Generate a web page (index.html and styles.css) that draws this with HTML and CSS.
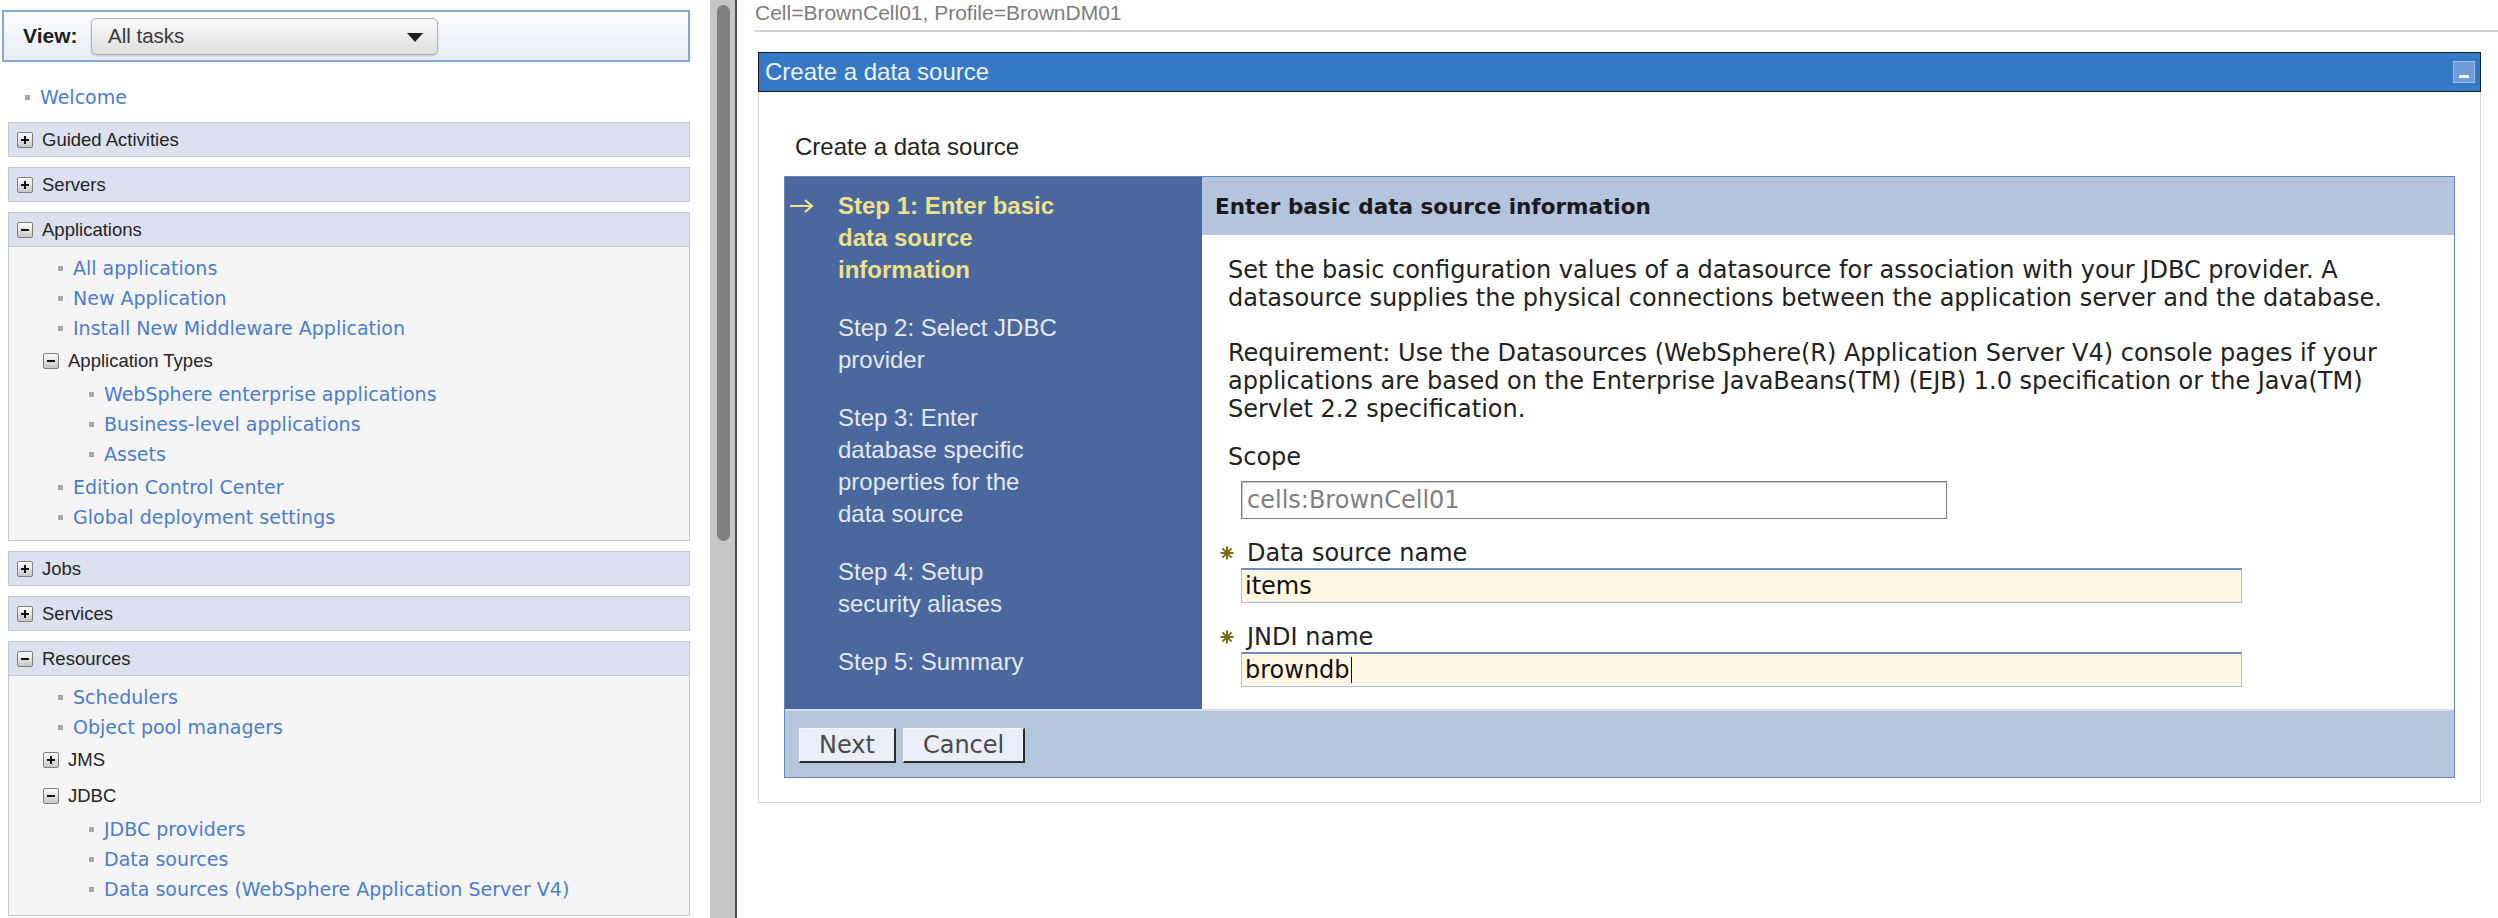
FILE: index.html
```html
<!DOCTYPE html>
<html lang="en">
<head>
<meta charset="utf-8">
<title>Create a data source</title>
<link rel="stylesheet" href="styles.css">
</head>
<body>
<div class="app">
  <aside class="nav">
    <div class="view-bar">
      <span class="view-label">View:</span>
      <div class="select"><span>All tasks</span><span class="caret"></span></div>
    </div>
    <div class="home"><span class="dot"></span><a class="lnk">Welcome</a></div>

    <div class="grp"><div class="grp-head"><span class="tg plus"></span>Guided Activities</div></div>
    <div class="grp"><div class="grp-head"><span class="tg plus"></span>Servers</div></div>
    <div class="grp">
      <div class="grp-head"><span class="tg minus"></span>Applications</div>
      <div class="grp-body">
        <div class="item"><span class="dot"></span><a class="lnk">All applications</a></div>
        <div class="item"><span class="dot"></span><a class="lnk">New Application</a></div>
        <div class="item"><span class="dot"></span><a class="lnk">Install New Middleware Application</a></div>
        <div class="sub"><span class="tg minus"></span>Application Types</div>
        <div class="sublist">
          <div class="item l2"><span class="dot"></span><a class="lnk">WebSphere enterprise applications</a></div>
          <div class="item l2"><span class="dot"></span><a class="lnk">Business-level applications</a></div>
          <div class="item l2"><span class="dot"></span><a class="lnk">Assets</a></div>
        </div>
        <div class="item"><span class="dot"></span><a class="lnk">Edition Control Center</a></div>
        <div class="item"><span class="dot"></span><a class="lnk">Global deployment settings</a></div>
      </div>
    </div>
    <div class="grp"><div class="grp-head"><span class="tg plus"></span>Jobs</div></div>
    <div class="grp"><div class="grp-head"><span class="tg plus"></span>Services</div></div>
    <div class="grp">
      <div class="grp-head"><span class="tg minus"></span>Resources</div>
      <div class="grp-body">
        <div class="item"><span class="dot"></span><a class="lnk">Schedulers</a></div>
        <div class="item"><span class="dot"></span><a class="lnk">Object pool managers</a></div>
        <div class="sub"><span class="tg plus"></span>JMS</div>
        <div class="sub"><span class="tg minus"></span>JDBC</div>
        <div class="sublist">
          <div class="item l2"><span class="dot"></span><a class="lnk">JDBC providers</a></div>
          <div class="item l2"><span class="dot"></span><a class="lnk">Data sources</a></div>
          <div class="item l2"><span class="dot"></span><a class="lnk">Data sources (WebSphere Application Server V4)</a></div>
        </div>
      </div>
    </div>
  </aside>

  <div class="sbar"><div class="thumb"></div></div>
  <div class="divider"></div>

  <main class="main">
    <div class="crumb">Cell=BrownCell01, Profile=BrownDM01</div>
    <div class="portlet">
      <div class="portlet-title">
        <span>Create a data source</span>
        <span class="min"><span class="min-dash"></span></span>
      </div>
      <h1 class="page-h">Create a data source</h1>
      <div class="wizard">
        <div class="wiz-main">
          <div class="steps">
            <div class="step current">
              <span class="mark"><svg width="26" height="16" viewBox="0 0 26 16"><path d="M1 8 H23 M16 2 L23 8 L16 14" fill="none" stroke="#efe28a" stroke-width="2.2"/></svg></span>
              <span class="step-text">Step 1: Enter basic data source information</span>
            </div>
            <div class="step"><span class="mark"></span><span class="step-text">Step 2: Select JDBC provider</span></div>
            <div class="step"><span class="mark"></span><span class="step-text">Step 3: Enter database specific properties for the data source</span></div>
            <div class="step"><span class="mark"></span><span class="step-text">Step 4: Setup security aliases</span></div>
            <div class="step"><span class="mark"></span><span class="step-text">Step 5: Summary</span></div>
          </div>
          <div class="wiz-content">
            <div class="wiz-head">Enter basic data source information</div>
            <div class="wiz-body">
              <p class="p1">Set the basic configuration values of a datasource for association with your JDBC provider. A datasource supplies the physical connections between the application server and the database.</p>
              <p class="p2">Requirement: Use the Datasources (WebSphere(R) Application Server V4) console pages if your applications are based on the Enterprise JavaBeans(TM) (EJB) 1.0 specification or the Java(TM) Servlet 2.2 specification.</p>
              <div class="label">Scope</div>
              <div class="inp ro">cells:BrownCell01</div>
              <div class="label req-label"><svg class="req" width="14" height="14" viewBox="0 0 14 14"><path d="M7 0.5 V13.5 M0.5 7 H13.5 M2.4 2.4 L11.6 11.6 M11.6 2.4 L2.4 11.6" stroke="#7a6a12" stroke-width="2"/></svg>Data source name</div>
              <div class="inp edit">items</div>
              <div class="label req-label"><svg class="req" width="14" height="14" viewBox="0 0 14 14"><path d="M7 0.5 V13.5 M0.5 7 H13.5 M2.4 2.4 L11.6 11.6 M11.6 2.4 L2.4 11.6" stroke="#7a6a12" stroke-width="2"/></svg>JNDI name</div>
              <div class="inp edit">browndb<span class="cursor"></span></div>
            </div>
          </div>
        </div>
        <div class="wiz-foot">
          <button class="btn">Next</button>
          <button class="btn">Cancel</button>
        </div>
      </div>
    </div>
  </main>
</div>
</body>
</html>
```

FILE: styles.css
```css
* { box-sizing: border-box; }
html, body { margin: 0; padding: 0; }
body {
  width: 2498px;
  height: 918px;
  overflow: hidden;
  background: #fff;
  font-family: "Liberation Sans", Arial, sans-serif;
  color: #222;
}
.app { display: flex; height: 918px; }

/* ---------- left navigation ---------- */
.nav { width: 710px; flex: none; overflow: hidden; background: #fff; }
.view-bar {
  margin: 10px 20px 0 2px;
  height: 52px;
  border: 2px solid #86a5d8;
  background: linear-gradient(#fdfeff, #e7ecf6);
  display: flex;
  align-items: center;
  padding-left: 19px;
}
.view-label { font-weight: bold; font-size: 21px; color: #1e1e1e; width: 55px; margin-right: 13px; }
.select {
  width: 347px;
  height: 37px;
  border: 1px solid #aeb0b4;
  border-radius: 5px;
  background: linear-gradient(#fafafa, #dedede);
  display: flex;
  align-items: center;
  justify-content: space-between;
  padding: 0 14px 0 16px;
  font-size: 20.5px;
  color: #3a3a3a;
  box-shadow: 0 1px 2px rgba(0,0,0,.18);
}
.caret {
  width: 0; height: 0;
  border-left: 8px solid transparent;
  border-right: 8px solid transparent;
  border-top: 9px solid #1e1e1e;
  margin-top: 3px;
}
.home { margin: 20px 0 10px; height: 30px; display: flex; align-items: center; padding-left: 25px; }
.dot { width: 5px; height: 5px; background: #a8a8a8; margin-right: 10px; flex: none; }
.lnk {
  font-family: "DejaVu Sans", sans-serif;
  font-size: 19px;
  color: #4a7dd0;
  text-decoration: none;
  white-space: nowrap;
}
.grp { margin: 0 20px 10px 8px; }
.grp-head {
  height: 35px;
  background: #dce0ef;
  border: 1px solid #c5c9d6;
  display: flex;
  align-items: center;
  padding-left: 8px;
  font-size: 18.5px;
  color: #252525;
}
.tg {
  width: 16px; height: 16px;
  border: 1px solid #7f7f7f;
  border-radius: 2px;
  background: linear-gradient(#fefefe, #c6c6c6);
  margin-right: 9px;
  position: relative;
  flex: none;
}
.tg::before {
  content: "";
  position: absolute;
  left: 3px; top: 6px;
  width: 8px; height: 2px;
  background: #111;
}
.tg.plus::after {
  content: "";
  position: absolute;
  left: 6px; top: 3px;
  width: 2px; height: 8px;
  background: #111;
}
.grp-body {
  background: #f5f5f5;
  border: 1px solid #c8c8c8;
  border-top: none;
  padding: 6px 0 8px;
}
.item { height: 30px; display: flex; align-items: center; padding-left: 49px; }
.item.l2 { padding-left: 80px; }
.sub {
  height: 36px;
  display: flex;
  align-items: center;
  padding-left: 34px;
  font-size: 18.5px;
  color: #252525;
}
.sublist { margin-bottom: 3px; }

/* ---------- splitter ---------- */
.sbar { width: 25px; flex: none; background: #c6c6c6; padding: 5px 0 0 7px; }
.thumb { width: 13px; height: 536px; background: #808080; border-radius: 7px; }
.divider { width: 2px; flex: none; background: #4d4d4d; }

/* ---------- main ---------- */
.main { flex: 1; min-width: 0; padding-left: 18px; }
.crumb {
  height: 32px;
  border-bottom: 2px solid #d3d3d3;
  font-size: 21px;
  line-height: 26px;
  color: #7d7d7d;
  white-space: nowrap;
}
.portlet {
  margin: 20px 17px 0 3px;
  border: 1px solid #d6d6d6;
  border-top: none;
  padding: 0 25px 24px;
}
.portlet-title {
  margin: 0 -26px;
  height: 40px;
  background: #3578c6;
  border: 1px solid #1b1b22;
  display: flex;
  align-items: center;
  justify-content: space-between;
  padding: 0 5px 0 6px;
  color: #eef3fb;
  font-size: 24px;
}
.min {
  width: 22px; height: 22px;
  background: #6f9ddb;
  border: 1px solid #9dbce6;
  display: flex;
  align-items: flex-end;
  justify-content: center;
  padding-bottom: 4px;
}
.min-dash { width: 10px; height: 3px; background: #f4f8ff; }
.page-h {
  margin: 41px 0 15px 11px;
  font-size: 24px;
  font-weight: normal;
  line-height: 28px;
  color: #222;
}

/* ---------- wizard ---------- */
.wizard { border: 1px solid #6786b9; }
.wiz-main { display: flex; }
.steps {
  width: 417px;
  flex: none;
  background: #4a689e;
  padding: 13px 0 0 4px;
}
.step {
  display: flex;
  margin-bottom: 26px;
  font-size: 24px;
  line-height: 32px;
  color: #e4e9f2;
}
.mark { width: 49px; flex: none; display: flex; align-items: center; height: 32px; }
.step-text { width: 226px; }
.step.current { color: #efe28a; font-weight: bold; }

.wiz-content { flex: 1; background: #fff; }
.wiz-head {
  height: 58px;
  background: #b4c4dc;
  display: flex;
  align-items: center;
  padding-left: 13px;
  font-family: "DejaVu Sans", sans-serif;
  font-weight: bold;
  font-size: 21.5px;
  color: #1a1a1a;
}
.wiz-body {
  padding: 21px 30px 22px 26px;
  font-family: "DejaVu Sans", sans-serif;
  font-size: 24px;
  line-height: 28px;
  color: #222;
}
.wiz-body p { margin: 0; }
.p1 { margin-bottom: 27px !important; }
.p2 { margin-bottom: 20px !important; }
.label { display: flex; align-items: center; height: 28px; }
.req-label { margin-left: -8px; margin-top: 20px; }
.req { margin-right: 13px; flex: none; }
.inp {
  margin-left: 13px;
  display: flex;
  align-items: center;
  white-space: nowrap;
}
.inp.ro {
  margin-top: 10px;
  width: 706px;
  height: 38px;
  border: 1px solid #7d7d7d;
  box-shadow: inset 1px 1px 0 #c9c9c9;
  padding-left: 5px;
  color: #808080;
}
.inp.edit {
  margin-top: 1px;
  width: 1001px;
  height: 35px;
  background: #fff7e1;
  border: 1px solid #a3c0e2;
  border-top: 2px solid #6c8ec0;
  padding-left: 3px;
  color: #111;
}
.cursor { width: 1px; height: 26px; background: #111; margin-left: 1px; }

.wiz-foot {
  background: #b5c5dc;
  border-top: 2px solid #d4deeb;
  height: 68px;
  padding: 17px 0 0 14px;
  display: flex;
  gap: 7px;
  align-items: flex-start;
}
.btn {
  height: 35px;
  padding: 0 19px;
  font-family: "DejaVu Sans", sans-serif;
  font-size: 24px;
  line-height: 30px;
  color: #4a4a4a;
  background: #e9eef9;
  border: 1px solid #f6f8fc;
  border-right: 2px solid #2b2b2b;
  border-bottom: 2px solid #2b2b2b;
}
```
